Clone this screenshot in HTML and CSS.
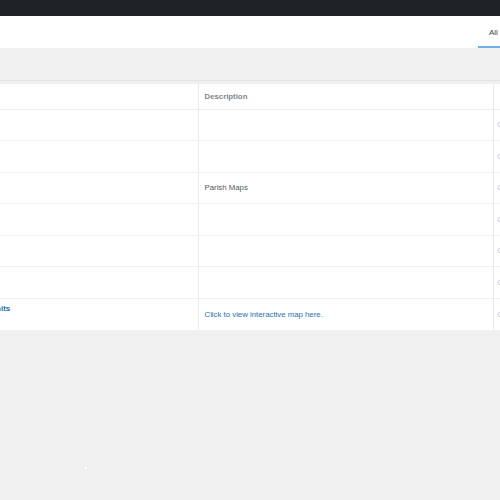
FILE: index.html
```html
<!DOCTYPE html>
<html>
<head>
<meta charset="utf-8">
<link rel="stylesheet" href="styles.css">
</head>
<body>
<div class="adminbar"><span class="bar-text">s</span></div>
<div class="header">
  <a class="tab">All</a>
</div>
<div class="toolbar"></div>
<div class="table-wrap">
<table class="list">
  <colgroup>
    <col class="c-name">
    <col class="c-desc">
    <col class="c-count">
  </colgroup>
  <thead>
    <tr class="head-row">
      <th class="col-name"></th>
      <th class="col-desc">Description</th>
      <th class="col-count"></th>
    </tr>
  </thead>
  <tbody>
    <tr><td class="col-name"></td><td class="col-desc"></td><td class="col-count">0</td></tr>
    <tr><td class="col-name"></td><td class="col-desc"></td><td class="col-count">0</td></tr>
    <tr><td class="col-name"></td><td class="col-desc">Parish Maps</td><td class="col-count">0</td></tr>
    <tr><td class="col-name"></td><td class="col-desc"></td><td class="col-count">0</td></tr>
    <tr><td class="col-name"></td><td class="col-desc"></td><td class="col-count">0</td></tr>
    <tr><td class="col-name"></td><td class="col-desc"></td><td class="col-count">0</td></tr>
    <tr><td class="col-name top"><a class="name-link">Parish Limits</a></td><td class="col-desc"><a class="desc-link">Click to view interactive map here.</a></td><td class="col-count">0</td></tr>
  </tbody>
</table>
</div>
<div class="dot"></div>
</body>
</html>
```
FILE: styles.css
```css
html, body {
  margin: 0;
  padding: 0;
  background: #f0f0f1;
  font-family: "Liberation Sans", Arial, sans-serif;
  overflow: hidden;
  height: 500px;
  position: relative;
}
.adminbar {
  height: 16px;
  background: #1d2327;
  overflow: hidden;
}
.bar-text {
  display: block;
  margin-left: -4px;
  color: #f0f0f1;
  font-size: 8px;
  line-height: 15px;
}
.header {
  height: 32px;
  background: #fff;
  display: flex;
  justify-content: flex-end;
}
.tab {
  display: block;
  padding: 4px 0 0 11px;
  margin-right: -10px;
  width: 21px;
  line-height: 26px;
  font-size: 8px;
  color: #3c434a;
  border-bottom: 2px solid #72aee6;
}
.toolbar {
  height: 32px;
  border-bottom: 1px solid #e3e3e5;
  margin-bottom: 3px;
}
.table-wrap {
  margin-left: -48px;
  width: 640px;
}
.list {
  width: 640px;
  border-collapse: collapse;
  background: #fff;
  table-layout: fixed;
  font-size: 7.8px;
}
.c-name { width: 246px; }
.c-desc { width: 295px; }
.c-count { width: 99px; }
.head-row th {
  height: 25px;
  box-sizing: border-box;
  padding: 0 6px;
  text-align: left;
  font-weight: 700;
  color: #82868b;
  border-bottom: 1px solid #eeeef0;
}
th.col-desc, td.col-desc, th.col-count, td.col-count {
  border-left: 1px solid #eaeaec;
}
tbody td {
  height: 30.5px;
  padding: 0 6px;
  vertical-align: middle;
  color: #50575e;
  border-bottom: 1px solid #f0f0f1;
  overflow: hidden;
  white-space: nowrap;
}
tbody tr:last-child td { border-bottom: none; }
td.col-count {
  padding-left: 4px;
  color: #c3c4c7;
}
td.top {
  vertical-align: top;
  height: 26px;
  padding-top: 5px;
  padding-left: 8px;
}
.name-link {
  color: #2271b1;
  font-weight: 700;
  font-size: 8px;
  line-height: 10px;
  display: inline-block;
}
.desc-link {
  color: #2271b1;
}
.dot {
  position: absolute;
  left: 85px;
  top: 467px;
  width: 2px;
  height: 2px;
  background: #fff;
}
```
